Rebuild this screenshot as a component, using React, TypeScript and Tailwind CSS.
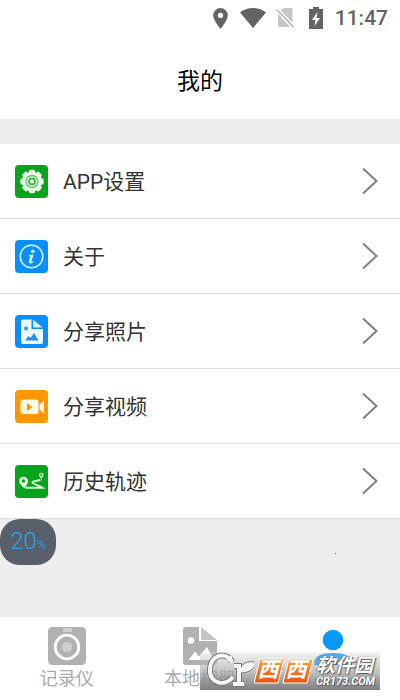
import React from "react";

function GearIcon() {
  const teeth = [0, 45, 90, 135, 180, 225, 270, 315];
  return (
    <svg viewBox="0 0 33 33" className="size-[33px] shrink-0" aria-hidden="true">
      <rect width="33" height="33" rx="4" fill="#06a41c" />
      <g fill="#e9fbe6">
        <circle cx="17" cy="16.5" r="9.8" />
        {teeth.map((a) => (
          <rect key={a} x="13.8" y="4.8" width="6.4" height="6" rx="1.8" transform={`rotate(${a} 17 16.5)`} />
        ))}
      </g>
      <circle cx="17" cy="16.5" r="6" fill="none" stroke="#5cc465" strokeWidth="1.3" />
      <circle cx="17" cy="16.5" r="3" fill="#e9fbe6" stroke="#3fb54b" strokeWidth="1.8" />
    </svg>
  );
}

function InfoIcon() {
  return (
    <svg viewBox="0 0 33 33" className="size-[33px] shrink-0" aria-hidden="true">
      <rect width="33" height="33" rx="4" fill="#078fff" />
      <circle cx="16.5" cy="16.5" r="11.3" fill="none" stroke="#c9f0ff" strokeWidth="1.7" />
      <circle cx="17.8" cy="11.2" r="1.8" fill="#d8f5ff" />
      <path d="M13.8 15.3l4.8-1.1-2 7.4c-.2.8.3.8 1.8-.5l.5.6c-2 2.2-5.800 2.600-5.100-.4l1.400-5-1.600-.2z" fill="#d8f5ff" />
    </svg>
  );
}

function PhotoIcon() {
  return (
    <svg viewBox="0 0 33 33" className="size-[33px] shrink-0" aria-hidden="true">
      <rect width="33" height="33" rx="4" fill="#078fff" />
      <path d="M8 4.500h8.500v9.500h11.500v13a2 2 0 0 1-2 2H8a2 2 0 0 1-2-2V6.500a2 2 0 0 1 2-2z" fill="#eefaff" />
      <path d="M18 4.500l9.500 8H18z" fill="#d4f1ff" />
      <circle cx="11" cy="13.500" r="2" fill="#2999ff" />
      <path d="M10 25.500l3.500-4.500 2 2 3.500-5 4.500 7.500z" fill="#2090ed" />
    </svg>
  );
}

function VideoIcon() {
  return (
    <svg viewBox="0 0 33 33" className="size-[33px] shrink-0" aria-hidden="true">
      <rect width="33" height="33" rx="4" fill="#ff9800" />
      <rect x="5.500" y="9.500" width="18" height="14.500" rx="2.500" fill="#fff9e9" />
      <path d="M24.500 14.500l4.500-3.500v12L24.500 19.500z" fill="#fff9e9" />
      <path d="M12 13l5.500 4-5.500 4z" fill="#ff9800" />
    </svg>
  );
}

function TrackIcon() {
  return (
    <svg viewBox="0 0 33 33" className="size-[33px] shrink-0" aria-hidden="true">
      <rect width="33" height="33" rx="4" fill="#06a41c" />
      <path d="M9.500 23.500C6 20 4 18.500 4 16.300a4.500 4.500 0 0 1 9 0c0 2-1.500 4-3.500 7.200z" fill="#e6fbe0" />
      <circle cx="8.500" cy="16" r="1.700" fill="#06a41c" />
      <path d="M10.500 22.800h17c-3-2.300-9.500-3.600-10-5.300-.4-1.400 3.500-1.500 8-2.500" fill="none" stroke="#d8f6d2" strokeWidth="2" />
      <circle cx="26.300" cy="10" r="1.700" fill="none" stroke="#d8f6d2" strokeWidth="1.300" />
      <path d="M25 11.500l1.300 3.500 1.200-3.500z" fill="#d8f6d2" />
    </svg>
  );
}

const rows = [
  { label: "APP设置", Icon: GearIcon },
  { label: "关于", Icon: InfoIcon },
  { label: "分享照片", Icon: PhotoIcon },
  { label: "分享视频", Icon: VideoIcon },
  { label: "历史轨迹", Icon: TrackIcon },
];

function StatusBar() {
  return (
    <div className="flex h-9 items-center justify-end pr-3 text-[#646464]">
      <svg viewBox="0 0 15 21" className="mr-3 h-[21px] w-[15px]" fill="currentColor" aria-hidden="true">
        <path fillRule="evenodd" d="M7.500 0A7.300 7.300 0 0 0 .2 7.300C.2 12.500 7.500 21 7.500 21s7.300-8.500 7.300-13.700A7.300 7.300 0 0 0 7.500 0zm0 4.800a2.600 2.600 0 1 1 0 5.200 2.600 2.600 0 0 1 0-5.200z" />
      </svg>
      <svg viewBox="0 0 26 20" className="mr-2.5 h-5 w-[26px]" fill="currentColor" aria-hidden="true">
        <path d="M13 20L0 4.500C7-1.500 19-1.500 26 4.500z" />
      </svg>
      <svg viewBox="0 0 19 20" className="mr-3.5 h-5 w-[19px]" aria-hidden="true">
        <path d="M7.500 0H15a1.500 1.500 0 0 1 1.500 1.500V17.500L4.500 3zM2 5.500L14 19H3.500A1.500 1.500 0 0 1 2 17.500z" fill="#c7c7c7" />
        <path d="M3.500 4L15.500 18 16.500 16 6 2z" fill="#c7c7c7" />
        <path d="M1.500 0L19 18.500" stroke="#fff" strokeWidth="1.500" />
        <path d="M.5 1.500L18 19.500" stroke="#b8b8b8" strokeWidth="1.500" />
      </svg>
      <svg viewBox="0 0 14 22" className="mr-3 h-[22px] w-3.5" aria-hidden="true">
        <path d="M4 0h6v2h4v20H0V2h4z" fill="currentColor" />
        <path d="M8.500 5L3 13h3.500L5.500 19 11 11H7.500z" fill="#fff" />
      </svg>
      <span className="text-[21px] leading-6 font-medium">11:47</span>
    </div>
  );
}

function CameraTab() {
  return (
    <svg viewBox="0 0 38 38" className="size-[38px]" aria-hidden="true">
      <rect width="38" height="38" rx="4.500" fill="#b1b1b1" />
      <rect x="15" y="1" width="9" height="4" fill="#cfcfcf" />
      <circle cx="19" cy="20" r="11.800" fill="#b1b1b1" stroke="#fff" strokeWidth="2.800" />
      <circle cx="19" cy="20" r="5.300" fill="#cfcfcf" />
    </svg>
  );
}

function AlbumTab() {
  return (
    <svg viewBox="0 0 34 38" className="h-[38px] w-[34px]" aria-hidden="true">
      <path d="M3 0h13v14h18v21a3 3 0 0 1-3 3H3a3 3 0 0 1-3-3V3a3 3 0 0 1 3-3z" fill="#b1b1b1" />
      <path d="M18 0l16 13H18z" fill="#c4c4c4" />
      <circle cx="8" cy="13.500" r="3.200" fill="#fff" />
      <path d="M5.500 33l6.500-8.500 4 5 8-9.500 7 13z" fill="#fff" />
    </svg>
  );
}

function PersonTab() {
  return (
    <svg viewBox="0 0 38 38" className="size-[38px]" fill="#0799ff" aria-hidden="true">
      <circle cx="19" cy="13" r="10.300" />
      <path d="M0 38c0-8 5-12 19-12s19 4 19 12z" />
    </svg>
  );
}

const tabs = [
  { label: "记录仪", Icon: CameraTab, iconOnly: false },
  { label: "本地相册", Icon: AlbumTab, iconOnly: false },
  { label: "我的", Icon: PersonTab, iconOnly: true },
];

function Watermark() {
  return (
    <div className="pointer-events-none absolute right-5 bottom-2.5 flex h-[38px] w-[180px] items-start bg-linear-to-b from-[#dddddd]/30 via-[#aaaaaa]/70 to-[#777777]/95">
      <svg viewBox="0 0 54 38" className="h-[38px] w-[54px] shrink-0" fill="none" aria-hidden="true">
        <g stroke="#777" strokeWidth="6">
          <path d="M32 10C29 1 11 0 10 17c-1 15 15 18 23 8" />
          <path d="M34 14h5v18m-6 0h11" />
        </g>
        <path d="M39 21c2-11 9-12 17-11-2 9-9 11-17 11z" fill="#f5f5f5" stroke="#777" />
        <g stroke="#f5f5f5" strokeWidth="4">
          <path d="M32 10C29 1 11 0 10 17c-1 15 15 18 23 8" />
          <path d="M34 14h5v18m-6 0h11" />
        </g>
        <path d="M32 3v9l-6-5z" fill="#f5f5f5" />
      </svg>
      <div className="relative mt-1.5 h-6 w-[60px] shrink-0">
        <svg viewBox="0 0 60 26" className="absolute inset-0 h-[26px] w-[60px]" stroke="#fff" aria-hidden="true">
          <defs>
            <linearGradient id="tile" x1="0" y1="0" x2="0" y2="1">
              <stop offset="0" stopColor="#ffa238" />
              <stop offset="1" stopColor="#e85314" />
            </linearGradient>
          </defs>
          <path d="M6 1h24l-6 24H0z" fill="url(#tile)" />
          <path d="M35 1h24l-6 24H29z" fill="url(#tile)" />
        </svg>
        <span className="relative flex justify-around pr-1 text-[21px] leading-6 font-bold text-white italic">
          <span>西</span>
          <span>西</span>
        </span>
      </div>
      <div className="mt-1 ml-0.5 shrink-0 font-bold whitespace-nowrap text-white italic [text-shadow:1px_1px_1px_#555,-1px_0_1px_#777]">
        <div className="text-[19px] leading-5">软件园</div>
        <div className="text-[11px] leading-3">CR173.COM</div>
      </div>
    </div>
  );
}

export default function App() {
  return (
    <div className="relative flex min-h-screen flex-col bg-[#eeeeee] font-[Roboto,'Noto_Sans_CJK_SC',sans-serif] text-[#333333]">
      <header className="bg-white pb-5">
        <StatusBar />
        <h1 className="pt-7 text-center text-[23px] leading-[35px] text-black">我的</h1>
      </header>

      <main className="flex-1 pt-[25px]">
        <ul>
          {rows.map(({ label, Icon }) => (
            <li key={label} className="border-b border-[#dddddd] bg-white">
              <button type="button" className="flex h-[74px] w-full items-center px-[15px] text-left">
                <Icon />
                <span className="ml-[15px] flex-1 pt-0.5 text-[21px] leading-8">{label}</span>
                <svg viewBox="0 0 30 30" className="size-[30px]" fill="none" stroke="#808080" strokeWidth="2" aria-hidden="true">
                  <path d="M8 2.500l13.500 12.500L8 27.500" />
                </svg>
              </button>
            </li>
          ))}
        </ul>
        <div className="flex items-start justify-between pr-16">
          <div className="flex h-[46px] w-14 items-baseline justify-center rounded-[20px] bg-[#595e6b] pt-1.5 font-light text-[#2fa4e7]">
            <span className="text-[24px] leading-8">20</span>
            <span className="text-[12px] leading-8">%</span>
          </div>
          <span className="mt-[34px] size-px bg-[#555555]" />
        </div>
      </main>

      <nav className="grid grid-cols-3 bg-white pt-2.5 pb-2">
        {tabs.map(({ label, Icon, iconOnly }) => (
          <button key={label} type="button" aria-label={label} className="flex flex-col items-center text-[#aaaaaa]">
            <Icon />
            {!iconOnly && <span className="text-[18px] leading-[27px]">{label}</span>}
          </button>
        ))}
      </nav>
      <Watermark />
    </div>
  );
}
